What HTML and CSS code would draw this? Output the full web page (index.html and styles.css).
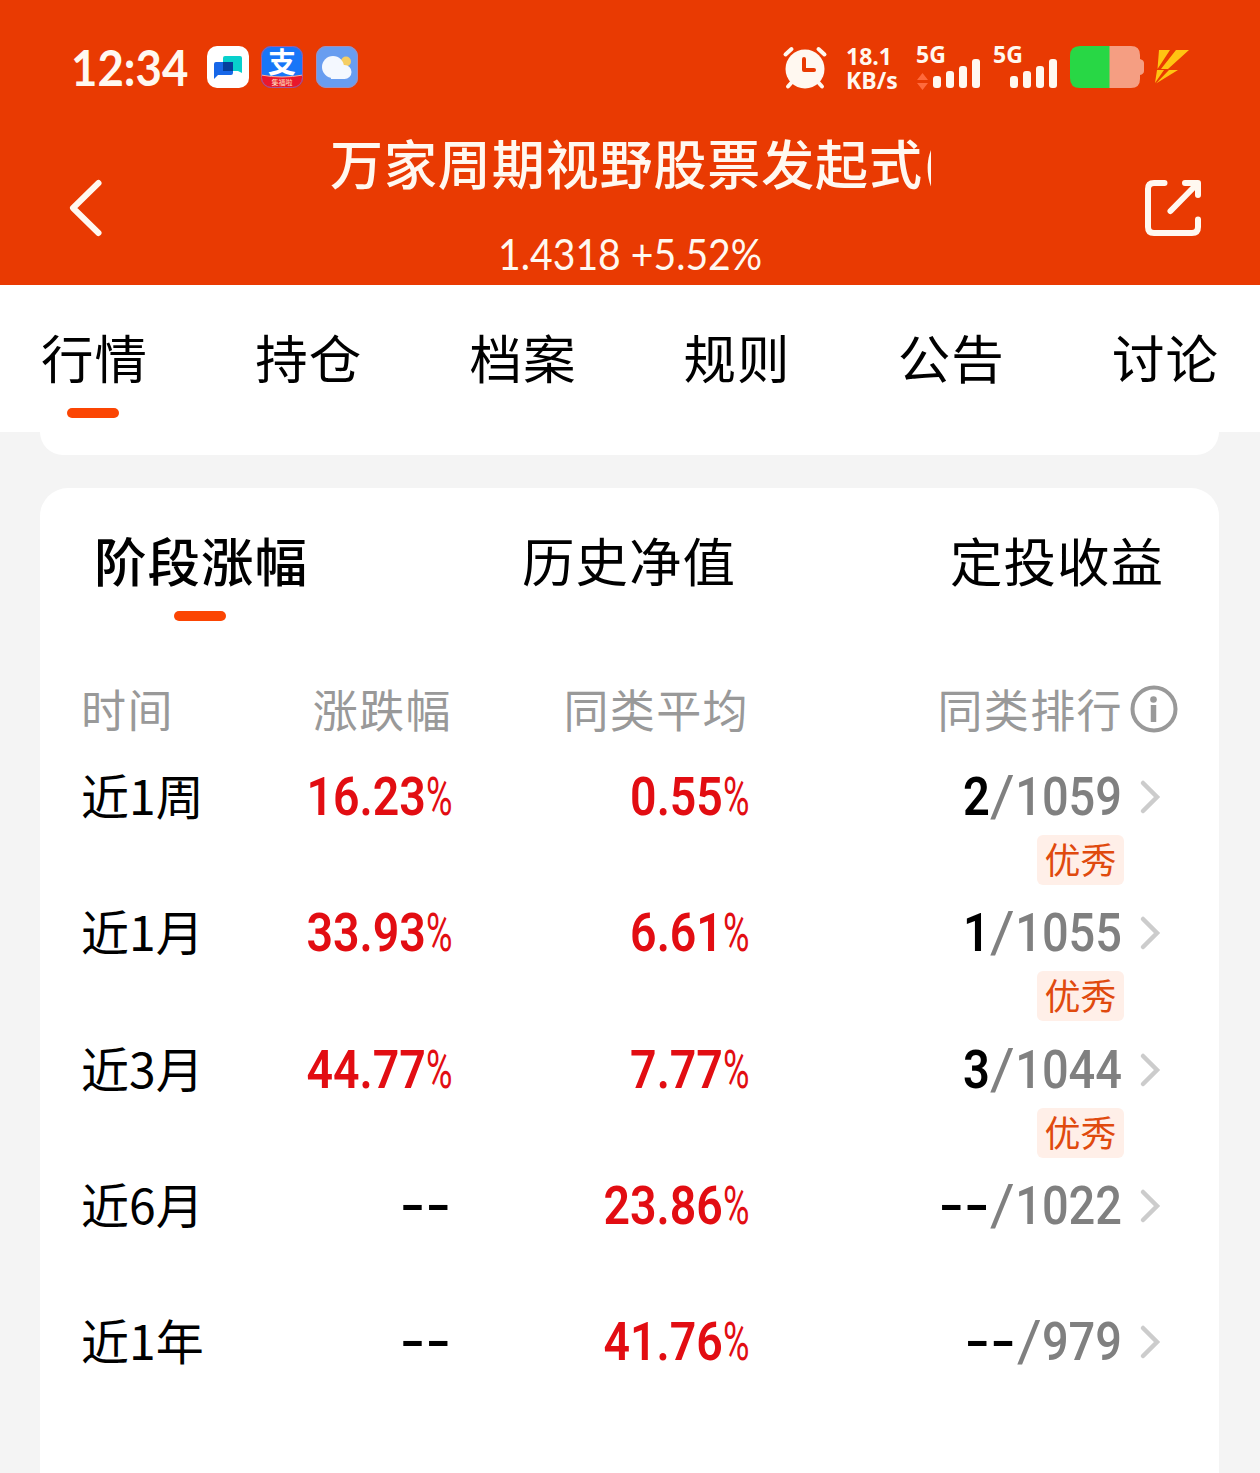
FILE: index.html
```html
<!DOCTYPE html>
<html lang="zh-CN">
<head>
  <meta charset="utf-8">
  <title>万家周期视野股票发起式</title>
  <link rel="stylesheet" href="styles.css">
</head>
<body>
  <header class="header">
    <div class="status">
      <div class="status-left">
        <span class="time"><span>12:34</span></span>
        <svg class="app" viewBox="0 0 42 42">
          <rect width="42" height="42" rx="10" fill="#fff"/>
          <path d="M18 10h15q2 0 2 2v15l-4-2H16V12q0-2 2-2z" fill="#08d0cc"/>
          <path d="M9 16h17v11q0 2-2 2H11l-4 4V18q0-2 2-2z" fill="#1767e8"/>
          <path d="M16 16h10v9H16z" fill="#063f9c"/>
        </svg>
        <svg class="app" viewBox="0 0 42 42">
          <defs><clipPath id="round"><rect width="42" height="42" rx="10"/></clipPath></defs>
          <g clip-path="url(#round)">
            <rect width="42" height="42" fill="#1876f8"/>
            <path d="M0 29q21 4 42 0v13H0z" fill="#e9182c"/>
            <path d="M0 29q21 4 42 0" fill="none" stroke="#ffb09a" stroke-width="1"/>
          </g>
          <text x="21" y="27" class="app-zhi">支</text>
          <text x="21" y="39" class="app-tag">集福啦</text>
          <rect x=".5" y=".5" width="41" height="41" rx="10" fill="none" stroke="#a65b9b"/>
        </svg>
        <svg class="app" viewBox="0 0 42 42">
          <rect width="42" height="42" rx="10" fill="#689df0"/>
          <rect x=".5" y=".5" width="41" height="41" rx="10" fill="none" stroke="#a48fb8"/>
          <circle cx="30" cy="15.500" r="5" fill="#f5ce64"/>
          <g fill="#f4f8ff">
            <circle cx="17" cy="21" r="11"/>
            <circle cx="28.500" cy="26" r="7"/>
            <path d="M14 25h15v8H15z"/>
          </g>
        </svg>
      </div>
      <div class="status-right">
        <svg class="alarm" viewBox="0 0 44 44">
          <g stroke="#fff8f0" stroke-width="4" stroke-linecap="round">
            <path d="M2.500 8.500l6-5.500M41.500 8.500l-6-5.500M9 36l-4 4.500M35 36l4 4.500"/>
          </g>
          <circle cx="22" cy="23" r="19.500" fill="#fff8f0"/>
          <path d="M21 13v11h10" fill="none" stroke="#e93a02" stroke-width="4" stroke-linecap="round" stroke-linejoin="round"/>
        </svg>
        <div class="speed"><b>18.1</b><b>KB/s</b></div>
        <svg class="signal" viewBox="0 0 66 44">
          <text x="0" y="17">5G</text>
          <path d="M1 34l5.500-7 5.500 7zM1 37h11l-5.500 7z" fill="#ff6a3c"/>
          <g fill="#fff8f0">
            <rect x="17" y="30" width="8" height="12" rx="3"/>
            <rect x="30" y="25" width="8" height="17" rx="3"/>
            <rect x="43" y="20" width="8" height="22" rx="3"/>
            <rect x="56" y="13" width="8" height="29" rx="3"/>
          </g>
        </svg>
        <svg class="signal signal-2" viewBox="0 0 66 44">
          <text x="0" y="17">5G</text>
          <g fill="#fff8f0">
            <rect x="17" y="30" width="8" height="12" rx="3"/>
            <rect x="30" y="25" width="8" height="17" rx="3"/>
            <rect x="43" y="20" width="8" height="22" rx="3"/>
            <rect x="56" y="13" width="8" height="29" rx="3"/>
          </g>
        </svg>
        <svg class="battery" viewBox="0 0 74 42">
          <path d="M39 0h22q9 0 9 9v4q4 1 4 4v8q0 3-4 4v4q0 9-9 9H39z" fill="#f59e82"/>
          <path d="M10 0h29.500v42H10Q0 42 0 32V10Q0 0 10 0z" fill="#28d745"/>
        </svg>
        <svg class="bolt" viewBox="0 0 36 36">
          <path d="M5 1h11L3.500 20zM22 1h13L14 20H7zM3 21h7L1 34zM15 21h9L2 34.500z" fill="#ffc412"/>
        </svg>
      </div>
    </div>
    <div class="nav">
      <svg class="back" viewBox="0 0 32 56">
        <path d="M28.500 3L3 28l25.500 25"/>
      </svg>
      <div class="fund">
        <h1>万家周期视野股票发起式(</h1>
        <p><span>1.4318 +5.52%</span></p>
      </div>
      <svg class="share" viewBox="0 0 56 56">
        <path d="M19.500 3H9Q3 3 3 9v38q0 6 6 6h38q6 0 6-6v-7.500M25.500 31L52 4M40 3h13v12"/>
      </svg>
    </div>
  </header>

  <nav class="tabs">
    <span class="tab active">行情</span>
    <span class="tab">持仓</span>
    <span class="tab">档案</span>
    <span class="tab">规则</span>
    <span class="tab">公告</span>
    <span class="tab">讨论</span>
  </nav>

  <main>
    <div class="card card-prev"></div>
    <section class="card">
      <div class="subtabs">
        <span class="tab active">阶段涨幅</span>
        <span class="tab">历史净值</span>
        <span class="tab">定投收益</span>
      </div>

      <div class="row head">
        <span>时间</span>
        <span>涨跌幅</span>
        <span>同类平均</span>
        <span>同类排行</span>
        <svg class="info" viewBox="0 0 48 48">
          <circle cx="24" cy="24" r="21.500" fill="none" stroke="#999" stroke-width="4"/>
          <circle cx="23.500" cy="14.500" r="3.300" fill="#999"/>
          <path d="M23.500 20v17" stroke="#999" stroke-width="5.500"/>
        </svg>
      </div>

      <div class="row">
        <span class="period">近1周</span>
        <span class="rate"><b>16.23</b><i>%</i></span>
        <span class="rate"><b>0.55</b><i>%</i></span>
        <span class="rank"><b>2</b><i>/</i>1059</span>
        <svg class="arrow" viewBox="0 0 20 34"><path d="M3 3l14 14L3 31"/></svg>
        <span class="badge">优秀</span>
      </div>
      <div class="row">
        <span class="period">近1月</span>
        <span class="rate"><b>33.93</b><i>%</i></span>
        <span class="rate"><b>6.61</b><i>%</i></span>
        <span class="rank"><b>1</b><i>/</i>1055</span>
        <svg class="arrow" viewBox="0 0 20 34"><path d="M3 3l14 14L3 31"/></svg>
        <span class="badge">优秀</span>
      </div>
      <div class="row">
        <span class="period">近3月</span>
        <span class="rate"><b>44.77</b><i>%</i></span>
        <span class="rate"><b>7.77</b><i>%</i></span>
        <span class="rank"><b>3</b><i>/</i>1044</span>
        <svg class="arrow" viewBox="0 0 20 34"><path d="M3 3l14 14L3 31"/></svg>
        <span class="badge">优秀</span>
      </div>
      <div class="row">
        <span class="period">近6月</span>
        <span class="rate"><b class="dash">--</b></span>
        <span class="rate"><b>23.86</b><i>%</i></span>
        <span class="rank"><b class="dash">--</b><i>/</i>1022</span>
        <svg class="arrow" viewBox="0 0 20 34"><path d="M3 3l14 14L3 31"/></svg>
      </div>
      <div class="row">
        <span class="period">近1年</span>
        <span class="rate"><b class="dash">--</b></span>
        <span class="rate"><b>41.76</b><i>%</i></span>
        <span class="rank"><b class="dash">--</b><i>/</i>979</span>
        <svg class="arrow" viewBox="0 0 20 34"><path d="M3 3l14 14L3 31"/></svg>
      </div>
    </section>
  </main>
</body>
</html>
```
FILE: styles.css
```css
* {
  box-sizing: border-box;
}

body {
  margin: 0;
  height: 1473px;
  overflow: hidden;
  display: flex;
  flex-direction: column;
  background: #f4f4f4;
  color: #000;
  font-family: "Noto Sans CJK SC", sans-serif;
}

svg {
  display: block;
  flex: none;
  overflow: visible;
}

/* header */
.header {
  height: 285px;
  flex: none;
  background: #e93a02;
  color: #fff8f0;
}

.status {
  height: 88px;
  padding: 46px 70px 0 71px;
  display: flex;
  justify-content: space-between;
}

.status-left,
.status-right {
  display: flex;
}

.time {
  width: 135.500px;
  font: 700 49px/42px Lato, sans-serif;
}

.time span {
  display: inline-block;
  transform: scaleX(.93);
  transform-origin: left;
}

.app {
  width: 42px;
  height: 42px;
  margin-right: 12.500px;
}

.app-zhi {
  font-size: 28px;
  font-weight: 700;
  fill: #fff;
  text-anchor: middle;
}

.app-tag {
  font-size: 7px;
  fill: #ffe0c0;
  text-anchor: middle;
}

.alarm {
  width: 44px;
  height: 44px;
  margin-right: 19px;
}

.speed {
  width: 70px;
  margin-top: -2px;
  display: flex;
  flex-direction: column;
  font: 23px/24px "Open Sans", sans-serif;
}

.signal {
  width: 66px;
  height: 44px;
  margin-right: 11px;
}

.signal text {
  font: 700 23px "Open Sans", sans-serif;
  fill: #fff8f0;
}

.battery {
  width: 74px;
  height: 42px;
  margin-right: 10px;
}

.bolt {
  width: 36px;
  height: 36px;
  margin-top: 3px;
}

.nav {
  padding: 0 59px 0 70px;
  height: 197px;
  display: flex;
  justify-content: space-between;
}

.back {
  width: 32px;
  height: 56px;
  margin-top: 92px;
}

.share {
  width: 56px;
  height: 56px;
  margin-top: 92px;
}

.back path,
.share path {
  fill: none;
  stroke: #fff8f0;
  stroke-width: 6;
  stroke-linecap: round;
  stroke-linejoin: round;
}

.fund {
  width: 601px;
  margin-left: 14px;
  text-align: center;
}

.fund h1 {
  margin: 0;
  padding-top: 34px;
  overflow: hidden;
  white-space: nowrap;
  text-align: left;
  font-size: 53px;
  font-weight: 500;
  line-height: 80px;
  letter-spacing: .900px;
}

.fund p {
  margin: 22px 0 0;
  font: 43px/60px Lato, sans-serif;
  white-space: nowrap;
}

.fund p span {
  display: inline-block;
  transform: scaleX(.91);
}

/* tabs */
.tabs {
  flex: none;
  height: 147px;
  padding: 0 41px;
  display: flex;
  justify-content: space-between;
  background: #fff;
}

.tab {
  display: flex;
  flex-direction: column;
  align-items: center;
  padding-top: 31px;
  font-size: 52.500px;
  line-height: 80px;
  letter-spacing: 1px;
}

.tab.active::after {
  content: "";
  width: 52px;
  height: 10px;
  margin: 12px 3px 0 0;
  border-radius: 5px;
  background: #fb4503;
}

/* cards */
.card {
  width: 1179px;
  height: 985px;
  margin-left: 40px;
  border-radius: 28px 28px 0 0;
  background: #fff;
}

.card-prev {
  height: 23px;
  margin-bottom: 33px;
  border-radius: 0 0 28px 28px;
}

.subtabs {
  height: 179px;
  padding: 0 55px 0 54px;
  display: flex;
  justify-content: space-between;
}

.subtabs .active {
  font-weight: 500;
}

.row {
  height: 136.300px;
  padding-left: 41px;
  display: grid;
  grid-template-columns: 171px 200px 297px 373px 60px;
  grid-template-rows: 78px 50px;
  text-align: right;
}

.head {
  height: 90px;
  grid-template-rows: 84px;
  color: #999;
  font-size: 45px;
  line-height: 84px;
  letter-spacing: 1.400px;
}

.head span:first-child,
.period {
  text-align: left;
}

.head span:nth-child(4) {
  margin-right: -1px;
}

.info {
  width: 48px;
  height: 48px;
  margin: 18px 0 0 8px;
}

.period {
  font-size: 48px;
  line-height: 75px;
}

.rate,
.rank {
  font: 54px/80px Roboto, sans-serif;
}

.rate {
  color: #e20d12;
  display: flex;
  justify-content: flex-end;
}

.rate b {
  font-weight: 600;
  transform: scaleX(.86);
  transform-origin: right;
}

.rate i {
  width: 26px;
  font-style: normal;
  transform: scaleX(.67);
  transform-origin: left;
}

.rank {
  color: #808080;
  font-weight: 500;
  transform: scaleX(.87);
  transform-origin: right;
}

.rank b {
  color: #000;
  font-weight: 600;
}

/* the slash is wider and thinner than the digits beside it */
.rank i {
  display: inline-block;
  width: 29px;
  font-style: normal;
  font-weight: 400;
  text-align: center;
  transform: scale(1.3, 1.06);
}

.rate b.dash {
  color: #000;
  font-weight: 500;
  letter-spacing: 1px;
  transform: scaleX(1.32);
}

.rank b.dash {
  display: inline-block;
  font-weight: 500;
  letter-spacing: 1px;
  transform: scaleX(1.52);
  transform-origin: right;
}

.arrow {
  width: 20px;
  height: 34px;
  margin: 23px 0 0 18px;
}

.arrow path {
  fill: none;
  stroke: #ccc;
  stroke-width: 4.500;
  stroke-linecap: round;
}

.badge {
  grid-column: 4;
  justify-self: end;
  width: 87px;
  height: 50px;
  margin-right: -2px;
  border-radius: 6px;
  background: #ffefe8;
  color: #e04a0e;
  font-size: 36px;
  line-height: 47px;
  text-align: center;
}
```
